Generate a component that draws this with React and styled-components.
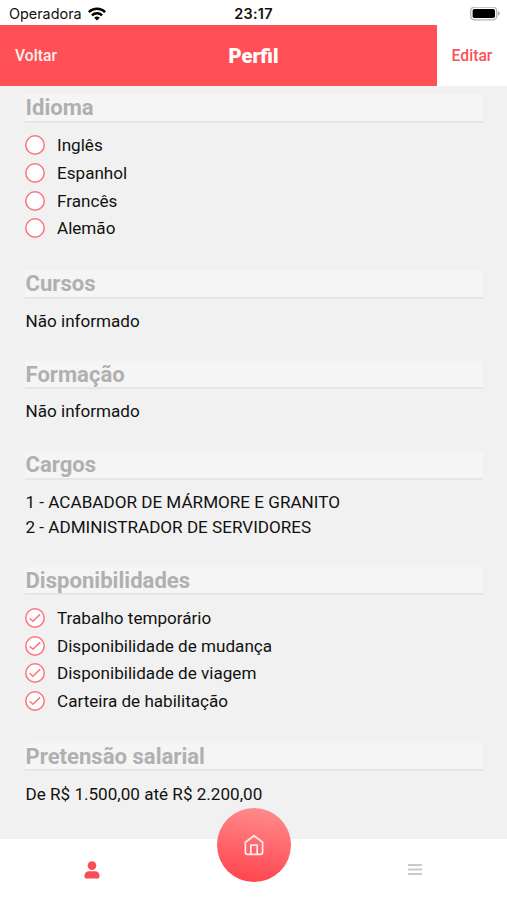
import React from "react";
import styled, { createGlobalStyle } from "styled-components";

const GlobalStyle = createGlobalStyle`
  * {
    box-sizing: border-box;
  }
  body {
    margin: 0;
    font-family: Roboto, sans-serif;
    background: #f1f1f1;
  }
`;

const Screen = styled.div`
  width: 507px;
  height: 900px;
  display: flex;
  flex-direction: column;
  overflow: hidden;
  background: #f1f1f1;
`;

const StatusBar = styled.div`
  flex: none;
  height: 25.4px;
  padding: 2px 7px 0 9px;
  display: grid;
  grid-template-columns: 1fr auto 1fr;
  align-items: center;
  background: #fff;
  color: #111;
  font-family: Inter, sans-serif;
  font-size: 14.4px;
`;

const Carrier = styled.div`
  display: flex;
  align-items: center;
  gap: 6px;
`;

const Clock = styled.div`
  margin-right: 2px;
  font-weight: 600;
  letter-spacing: 0.3px;
`;

const BatteryIcon = styled.svg`
  justify-self: end;
`;

const Header = styled.header`
  flex: none;
  height: 61px;
  display: grid;
  grid-template-columns: 70px 1fr 70px;
  background: #ff5057;
`;

const HeaderButton = styled.button`
  border: 0;
  padding: 0 0 1px ${(props) => (props.$inverted ? "0" : "2px")};
  font-family: inherit;
  font-size: 15.7px;
  font-weight: 500;
  color: ${(props) => (props.$inverted ? "#f9525a" : "#fff0f0")};
  background: ${(props) => (props.$inverted ? "#fff" : "transparent")};
`;

const Title = styled.h1`
  margin: 0;
  align-self: center;
  text-align: center;
  font-size: 20.2px;
  font-weight: 900;
  color: #fff;
`;

const Content = styled.main`
  flex: 1;
  min-height: 0;
  padding: 7.8px 24px 0 25px;
`;

const Section = styled.section`
  padding-bottom: ${(props) => (props.$list ? "28px" : "26.4px")};
`;

const SectionTitle = styled.h2`
  margin: 0 0 ${(props) => (props.$list ? "8.6px" : "10.2px")};
  height: 28.6px;
  padding-left: 0.5px;
  border-bottom: 2px solid #e6e6e6;
  background: #f5f5f5;
  color: #b0b0b0;
  font-size: 22.1px;
  font-weight: 700;
  line-height: 27px;
`;

const Text = styled.p`
  margin: 0;
  padding-left: 0.5px;
  font-size: 17.1px;
  line-height: 25.3px;
  color: #111;
`;

const Option = styled.div`
  height: 27.7px;
  display: flex;
  align-items: center;
  gap: 12px;
  font-size: 17.1px;
  color: #111;
`;

const TabBar = styled.nav`
  flex: none;
  height: 61.5px;
  padding: 0 11px;
  display: grid;
  grid-template-columns: repeat(3, 1fr);
  justify-items: center;
  align-items: center;
  background: #fff;
`;

const TabIcon = styled.svg`
  margin-top: 1px;
`;

const HomeButton = styled.button`
  align-self: start;
  width: 74px;
  height: 74px;
  margin: -30.5px 0 0 1px;
  padding: 0;
  border: 0;
  border-radius: 50%;
  display: flex;
  align-items: center;
  justify-content: center;
  background: linear-gradient(190deg, #ff9090 0%, #ff464f 92%);
`;

const languages = ["Inglês", "Espanhol", "Francês", "Alemão"];

const availability = [
  "Trabalho temporário",
  "Disponibilidade de mudança",
  "Disponibilidade de viagem",
  "Carteira de habilitação",
];

const Check = ({ checked }) => (
  <svg width="20" height="20" viewBox="0 0 20 20" fill="none" stroke="#fa757a">
    <circle cx="10" cy="10" r="9.2" fill="#fff" strokeWidth="1.5" />
    {checked && <path d="M4.6 10.3 8 13.3 15 6.4" strokeWidth="1.5" />}
  </svg>
);

const OptionSection = ({ title, items, checked }) => (
  <Section $list>
    <SectionTitle $list>{title}</SectionTitle>
    {items.map((item) => (
      <Option key={item}>
        <Check checked={checked} />
        {item}
      </Option>
    ))}
  </Section>
);

const TextSection = ({ title, lines }) => (
  <Section>
    <SectionTitle>{title}</SectionTitle>
    {lines.map((line) => (
      <Text key={line}>{line}</Text>
    ))}
  </Section>
);

const App = () => {
  return (
    <>
      <GlobalStyle />
      <Screen>
        <StatusBar>
          <Carrier>
            Operadora
            <svg width="18" height="14" viewBox="0 0 18 14" fill="none" stroke="#000" strokeWidth="2.4">
              <path d="M.8 5.1a11.6 11.6 0 0 1 16.4 0" />
              <path d="M3.9 8.3a7.2 7.2 0 0 1 10.2 0" />
              <path d="M9 13.5 6.2 10.8a4 4 0 0 1 5.6 0Z" fill="#000" stroke="none" />
            </svg>
          </Carrier>
          <Clock>23:17</Clock>
          <BatteryIcon width="30" height="14" viewBox="0 0 30 14">
            <rect x="0.7" y="0.2" width="26" height="12.6" rx="3.6" fill="#fff" stroke="#b4b4b4" strokeWidth="1.3" />
            <rect x="2.6" y="2" width="22.4" height="9" rx="1.8" fill="#000" />
            <path d="M28 4.3q1.7.5 1.7 2.2T28 8.7Z" fill="#aaa" />
          </BatteryIcon>
        </StatusBar>
        <Header>
          <HeaderButton>Voltar</HeaderButton>
          <Title>Perfil</Title>
          <HeaderButton $inverted>Editar</HeaderButton>
        </Header>
        <Content>
          <OptionSection title="Idioma" items={languages} />
          <TextSection title="Cursos" lines={["Não informado"]} />
          <TextSection title="Formação" lines={["Não informado"]} />
          <TextSection
            title="Cargos"
            lines={[
              "1 - ACABADOR DE MÁRMORE E GRANITO",
              "2 - ADMINISTRADOR DE SERVIDORES",
            ]}
          />
          <OptionSection title="Disponibilidades" items={availability} checked />
          <TextSection
            title="Pretensão salarial"
            lines={["De R$ 1.500,00 até R$ 2.200,00"]}
          />
        </Content>
        <TabBar>
          <TabIcon width="16" height="18" viewBox="0 0 16 18" fill="#fa4d55">
            <circle cx="8" cy="4.6" r="4.3" />
            <path d="M.5 15.2c0-3.4 1.8-5 4.4-5h6.2c2.6 0 4.4 1.6 4.4 5 0 1.5-.8 2.3-2 2.3h-11c-1.2 0-2-.8-2-2.3Z" />
          </TabIcon>
          <HomeButton>
            <svg width="20" height="22" viewBox="0 0 20 22" fill="none" stroke="#ffecec" strokeWidth="1.7" strokeLinejoin="round">
              <path d="M1.4 8.2 10 1.7l8.6 6.5v10.1q0 2-2 2H3.4q-2 0-2-2Z" />
              <path d="M6.8 20.3v-9.2h6.4v9.2" />
            </svg>
          </HomeButton>
          <TabIcon width="14" height="12" viewBox="0 0 14 12" fill="#c9c9c9">
            <rect width="14" height="2" />
            <rect y="4.5" width="14" height="2" />
            <rect y="9" width="14" height="2" />
          </TabIcon>
        </TabBar>
      </Screen>
    </>
  );
};

export default App;
